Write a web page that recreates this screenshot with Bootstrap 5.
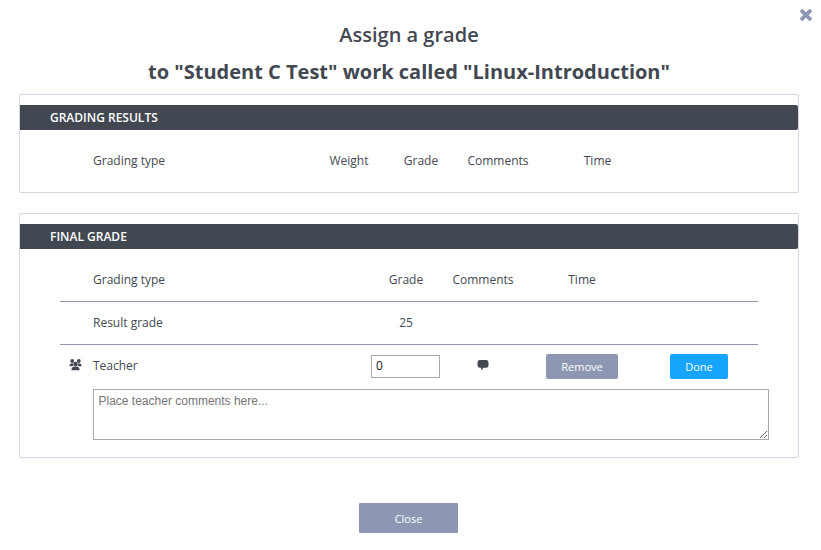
<!DOCTYPE html>
<html lang="en">
<head>
<meta charset="utf-8">
<meta name="viewport" content="width=device-width, initial-scale=1">
<title>Assign a grade</title>
<link href="https://cdn.jsdelivr.net/npm/bootstrap@5.3.0/dist/css/bootstrap.min.css" rel="stylesheet">
<style>
body { font-family: "Open Sans", sans-serif; font-size: 12px; line-height: 18px; color: #424851; background: #fff; }
.dialog { height: 550px; padding: 0 22px 0 19px; overflow: hidden; }
.dismiss { top: 9px; right: 9px; line-height: 0; }
.title { font-size: 20px; line-height: 30px; font-weight: 600; padding-top: 20px; }
.subtitle { font-size: 20px; line-height: 30px; font-weight: 700; margin-top: 7px; margin-bottom: 7px; }
.panel { border: 1px solid #d4d6e6; border-radius: 2px; padding-top: 10px; }
.panel-results { height: 99px; }
.panel-final { height: 245px; margin-top: 20px; }
.bar { height: 25px; line-height: 25px; padding-left: 30px; background: #424851; color: #fff; font-weight: 600; border-radius: 0 2px 2px 0; }
.line { display: grid; height: 43px; margin: 0 40px; align-items: center; text-align: center; }
.line > .name { text-align: left; }
.cols-results { grid-template-columns: 33px 227px 58px 8px 70px 84px 115px 1fr; margin-top: 9px; }
.cols-final { grid-template-columns: 33px 278px 70px 84px 114px 1fr; }
.first { margin-top: 10px; }
.entry { height: 42px; }
.glyph { margin-bottom: 2px; }
.ruled { border-bottom: 1px solid #8d97b3; }
.field { height: 23px; width: 69px; padding: 0 4px 2px; border: 1px solid #a9a9a9; border-radius: 0; font-size: 12px; line-height: 19px; color: #222; }
.notes { display: block; width: 676px; height: 51px; margin: 2px 0 0 73px; padding: 3px 4.500px; border: 1px solid #a9a9a9; border-radius: 0; font: 12px/17px "Liberation Sans", sans-serif; resize: both; }
.notes::placeholder { color: #757575; }
.btn { --bs-btn-font-size: 11px; --bs-btn-padding-y: 0; --bs-btn-padding-x: 0; --bs-btn-border-width: 0; --bs-btn-border-radius: 2px; line-height: 26px; height: 25px; color: #fff; font-weight: 500; }
.btn-slate { background: #8d97b3; }
.btn-azure { background: #17a4fd; }
.w-remove { width: 72px; }
.w-done { width: 58px; margin-left: 1px; }
.w-close { width: 99px; height: 30px; line-height: 32px; border-radius: 1px; }
.actions { margin-top: 45px; padding-right: 1px; }
</style>
<script src="https://cdn.jsdelivr.net/npm/bootstrap@5.3.0/dist/js/bootstrap.bundle.min.js"></script>
</head>
<body>
<main class="dialog position-relative">
  <a class="dismiss position-absolute" href="#" aria-label="Dismiss">
    <svg width="12" height="12" viewBox="0 0 12 12"><path d="M2.300 2.300 9.700 9.700M9.700 2.300 2.300 9.700" stroke="#8d97b3" stroke-width="3.800" stroke-linecap="square" stroke-linejoin="round"/></svg>
  </a>
  <h1 class="title text-center mb-0">Assign a grade</h1>
  <h2 class="subtitle text-center">to "Student C Test" work called "Linux-Introduction"</h2>

  <section class="panel panel-results">
    <div class="bar">GRADING RESULTS</div>
    <div class="line cols-results">
      <span></span><span class="name">Grading type</span><span>Weight</span><span></span><span>Grade</span><span>Comments</span><span>Time</span><span></span>
    </div>
  </section>

  <section class="panel panel-final">
    <div class="bar">FINAL GRADE</div>
    <div class="line cols-final ruled first">
      <span></span><span class="name">Grading type</span><span>Grade</span><span>Comments</span><span>Time</span><span></span>
    </div>
    <div class="line cols-final ruled">
      <span></span><span class="name">Result grade</span><span>25</span><span></span><span></span><span></span>
    </div>
    <div class="line cols-final entry">
      <svg class="glyph ms-2" width="15" height="12" viewBox="0 0 15 12" fill="#424851">
        <circle cx="4.200" cy="2" r="1.900"/><circle cx="10.800" cy="2" r="1.900"/>
        <path d="M1.500 7.300V6.200Q1.500 4.500 3.200 4.500h2v2L4.300 7.300zM13.500 7.300V6.200Q13.500 4.500 11.800 4.500h-2v2l.9.800z"/>
        <circle cx="7.500" cy="5" r="2.200"/>
        <path d="M3.500 11.300V10Q3.700 8 5.800 7.500h3.400Q11.300 8 11.500 10v1.300z"/>
      </svg>
      <span class="name">Teacher</span>
      <span class="text-start"><input class="field d-block" type="text" value="0" aria-label="Grade"></span>
      <span><svg class="glyph d-block mx-auto" width="13" height="12" viewBox="0 0 13 12" fill="#424851"><path d="M3 1h6q2.500 0 2.500 2.500v2.900Q11.500 8.800 9 8.800H6.700L4.200 11.500V8.800H3Q.5 8.800.5 6.400V3.500Q.5 1 3 1z"/></svg></span>
      <span><button class="btn btn-slate w-remove" type="button">Remove</button></span>
      <span><button class="btn btn-azure w-done" type="button">Done</button></span>
    </div>
    <textarea class="notes" placeholder="Place teacher comments here..." aria-label="Teacher comments"></textarea>
  </section>

  <div class="actions d-flex justify-content-center">
    <button class="btn btn-slate w-close" type="button">Close</button>
  </div>
</main>
</body>
</html>
